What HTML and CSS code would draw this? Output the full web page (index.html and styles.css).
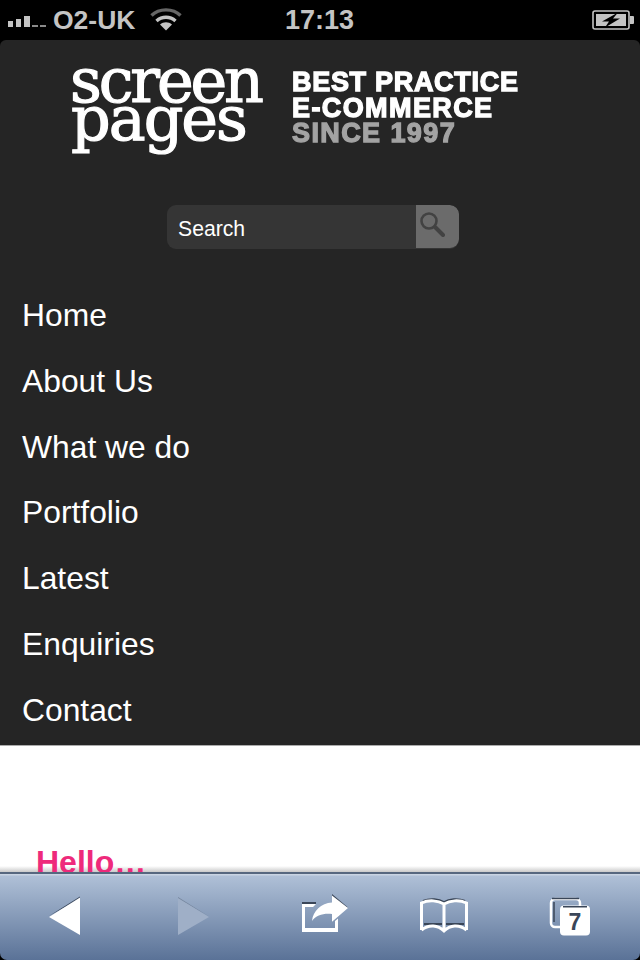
FILE: index.html
```html
<!DOCTYPE html>
<html lang="en">
<head>
<meta charset="utf-8">
<title>Screen Pages</title>
<link rel="stylesheet" href="styles.css">
</head>
<body>
<div class="phone">
  <div class="status">
    <div class="status-left">
      <svg class="signal" width="40" height="12" viewBox="0 0 40 12"><path fill="#c4c4c4" d="M0 6h5v6H0zM8 4h5v8H8zM16 1h6v11h-6z"/><path fill="#8a8a8a" d="M24 10h6v2h-6zM32 10h6v2h-6z"/></svg>
      <span class="carrier">O2-UK</span>
      <svg class="wifi" width="32" height="24" viewBox="0 0 32 24"><g fill="none" stroke-width="3.4"><path stroke="#666" d="M1.5 8.5C9 1 23 1 30.5 8.5"/><path stroke="#c4c4c4" d="M6.5 14C12 9 20 9 25.500 14"/></g><path fill="#c4c4c4" d="M10 17.500C13.500 14.500 18.500 14.500 22 17.500L16 23.500z"/></svg>
    </div>
    <span class="clock">17:13</span>
    <div class="status-right">
      <svg width="42" height="20" viewBox="0 0 42 20"><rect x="1" y="1" width="36" height="18" rx="2" fill="none" stroke="#c4c4c4" stroke-width="1.6"/><rect x="4" y="4" width="30" height="12" fill="#c4c4c4"/><path fill="#c4c4c4" d="M38 6h3a1 1 0 0 1 1 1v6a1 1 0 0 1-1 1h-3z"/><path fill="#000" d="M26 2.500L10 11.500h7L13 17.500 28 8.500h-7z"/></svg>
    </div>
  </div>

  <header class="panel">
    <div class="brand">
      <div class="logo"><span class="logo-top">screen</span><span class="logo-bottom">pages</span></div>
      <div class="tagline"><span class="line-best">BEST PRACTICE</span><span class="line-wide">E-COMMERCE</span><span class="line-wide since">SINCE 1997</span></div>
    </div>
    <form class="search">
      <span class="search-field">Search</span>
      <span class="search-button">
        <svg width="30" height="30" viewBox="0 0 30 30"><g fill="none" stroke="#424242"><circle cx="11" cy="11" r="7.500" stroke-width="2.600"/><path d="M17 17l8 8" stroke-width="4" stroke-linecap="round"/></g></svg>
      </span>
    </form>
    <nav class="menu">
      <a class="menu-item">Home</a>
      <a class="menu-item">About Us</a>
      <a class="menu-item">What we do</a>
      <a class="menu-item">Portfolio</a>
      <a class="menu-item">Latest</a>
      <a class="menu-item">Enquiries</a>
      <a class="menu-item">Contact</a>
    </nav>
  </header>

  <main class="content">
    <h1 class="hello">Hello…</h1>
  </main>

  <footer class="toolbar">
    <svg class="tool" viewBox="0 0 128 88"><path fill="#39475c" d="M49 44L80 24.500V27z"/><path fill="#fff" d="M49 45L80 25.500V63z"/></svg>
    <svg class="tool" viewBox="0 0 128 88"><path fill="#76879f" d="M50 25L81 44.500 50 27z"/><path fill="#9fafc7" d="M50 26L81 45 50 63z"/></svg>
    <svg class="tool" viewBox="0 0 128 88">
      <path fill="#3a4658" d="M46 30h14v2H46zM52 56h30v3H52z"/>
      <path fill="#fff" d="M46 32h14l-3 3H49v21h30v-7l3-2.500V60H46z"/>
      <path fill="#3a4658" d="M76 22L92 35.500 76 34z"/>
      <path fill="#fff" d="M76 23.500L92 36 76 49.700V42C68 41 60 43 56 49 57 39 65 31 76 30.500z"/>
    </svg>
    <svg class="tool" viewBox="0 0 128 88">
      <path fill="none" stroke="#3a4658" stroke-width="2" d="M39 29C46 26 55 27 60 30 65 27 74 26 81 29"/>
      <path fill="#3a4658" d="M40 51h18v2H40zM62 51h18v2H62z"/>
      <path fill="none" stroke="#fff" stroke-width="3" d="M37.500 58V31C45 27.500 54 28.500 60 32 66 28.500 75 27.500 82.500 31V58M37.500 58C45 52 54 53 60 59 66 53 75 52 82.500 58M60 32V58"/>
    </svg>
    <svg class="tool" viewBox="0 0 128 88">
      <rect x="39" y="27" width="29" height="28" rx="4" fill="none" stroke="#fff" stroke-width="2.500"/>
      <path fill="none" stroke="#3a4658" stroke-width="1.500" d="M40 26.500h27M42 30v20"/>
      <rect x="48" y="33.500" width="30" height="30" rx="4" fill="#fff"/>
      <path fill="#3a4658" d="M51 34h24v1.500H51z"/>
      <text class="tab-count" x="63" y="57.500" text-anchor="middle">7</text>
    </svg>
  </footer>
</div>
</body>
</html>
```
FILE: styles.css
```css
* { box-sizing: border-box; }
html, body { margin: 0; padding: 0; background: #000; }
body { font-family: "Liberation Sans", Arial, sans-serif; }

.phone {
  width: 640px;
  height: 960px;
  display: flex;
  flex-direction: column;
  overflow: hidden;
  background: #000;
}

.status {
  height: 40px;
  flex: none;
  display: grid;
  grid-template-columns: 1fr auto 1fr;
  align-items: center;
  color: #c4c4c4;
  font-weight: bold;
  padding: 0 6px 0 8px;
}
.status-left { display: flex; align-items: center; }
.signal { margin-top: 1px; }
.carrier { font-size: 26.500px; margin-left: 5px; }
.wifi { margin-left: 15px; margin-top: -3px; }
.clock { font-size: 27px; margin-left: -3px; }
.status-right { display: flex; justify-content: flex-end; margin-top: -1px; }

.panel {
  flex: none;
  height: 706px;
  background: #252525;
  border-radius: 6px 6px 0 0;
  border-bottom: 1px solid #ababab;
  display: flex;
  flex-direction: column;
}

.brand {
  display: flex;
  padding: 24px 0 0 70px;
  height: 165px;
  gap: 32px;
}
.logo {
  display: flex;
  flex-direction: column;
  width: 190px;
  margin-top: -2px;
  font-family: "DejaVu Serif", serif;
  color: #fff;
  font-size: 62px;
  line-height: 38px;
  letter-spacing: -3.100px;
  -webkit-text-stroke: 1.200px currentColor;
  filter: blur(0.4px);
}
.logo-bottom { margin-left: 1px; letter-spacing: -2px; }
.tagline {
  display: flex;
  flex-direction: column;
  font-weight: bold;
  font-size: 27px;
  line-height: 25.500px;
  color: #fff;
  -webkit-text-stroke: 1.300px currentColor;
  filter: blur(0.5px);
  padding-top: 6px;
}
.line-best { letter-spacing: 0.700px; }
.line-wide { letter-spacing: 1.400px; }
.since { color: #a3a3a3; }

.search {
  align-self: flex-start;
  margin-left: 167px;
  width: 292px;
  height: 44px;
  display: flex;
  background: #353535;
  border-radius: 9px;
  overflow: hidden;
  flex: none;
}
.search-field {
  flex: 1;
  padding-left: 11px;
  color: #fff;
  font-size: 21.200px;
  line-height: 48px;
}
.search-button {
  width: 43px;
  height: 43px;
  background: #6b6b6b;
  border-radius: 0 9px 9px 0;
  padding: 5px 0 0 2px;
  display: block;
}
.search-button svg { display: block; filter: blur(0.7px); }

.menu {
  display: flex;
  flex-direction: column;
  padding-top: 34px;
}
.menu-item {
  padding-left: 22px;
  color: #fff;
  font-size: 31.800px;
  line-height: 65.800px;
}

.content {
  flex: 1;
  min-height: 0;
  overflow: hidden;
  background: linear-gradient(#fff calc(100% - 6px), #c9c9c9);
  padding: 96px 0 0 36px;
}
.hello {
  margin: 0;
  color: #ee2a7b;
  font-size: 32px;
  line-height: 40px;
  font-weight: bold;
}

.toolbar {
  flex: none;
  height: 88px;
  display: grid;
  grid-template-columns: repeat(5, 128px);
  background: linear-gradient(#c9d4e3 0, #c9d4e3 1px, #afc0d7 2px, #5a7297 100%);
  border-top: 2px solid #56677f;
  border-radius: 0 0 7px 7px;
}
.tool { display: block; width: 128px; height: 88px; margin-top: -2px; }
.tab-count { font-family: "Liberation Sans", sans-serif; font-weight: bold; font-size: 23px; fill: #3a4658; }
```
